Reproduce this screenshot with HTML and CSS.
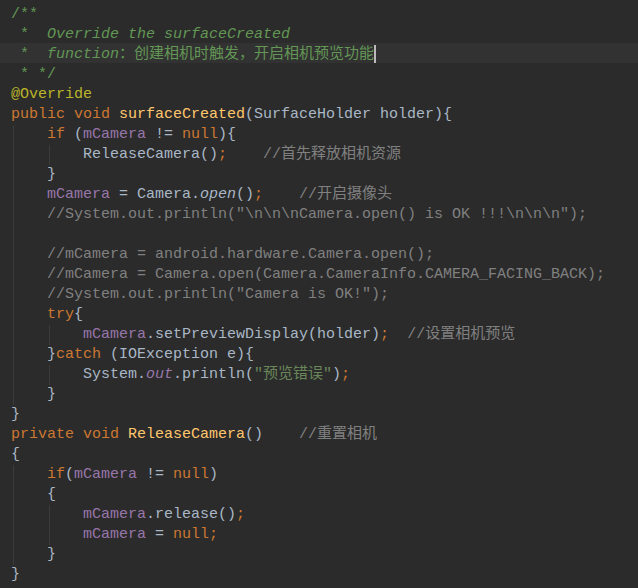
FILE: index.html
```html
<!DOCTYPE html>
<html lang="zh">
<head>
    <meta charset="UTF-8">
    <title>CameraPreview.java</title>
    <link rel="stylesheet" href="styles.css">
</head>
<body>
    <div class="editor">
        <div class="ln"><span class="doc">/**</span></div>
        <div class="ln"><span class="doc"> *  <i>Override the surfaceCreated</i></span></div>
        <div class="ln current"><span class="doc"> *  <i>function</i>：创建相机时触发，开启相机预览功能</span><span class="caret"></span></div>
        <div class="ln"><span class="doc"> * */</span></div>
        <div class="ln"><span class="ann">@Override</span></div>
        <div class="ln"><span class="kw">public void </span><span class="fn">surfaceCreated</span>(SurfaceHolder holder){</div>
        <div class="ln"><span class="g">    </span><span class="kw">if </span>(<span class="fld">mCamera</span> != <span class="kw">null</span>){</div>
        <div class="ln"><span class="g">    </span><span class="g">    </span>ReleaseCamera()<span class="kw">;</span>    <span class="cm">//首先释放相机资源</span></div>
        <div class="ln"><span class="g">    </span>}</div>
        <div class="ln"><span class="g">    </span><span class="fld">mCamera</span> = Camera.<i>open</i>()<span class="kw">;</span>    <span class="cm">//开启摄像头</span></div>
        <div class="ln"><span class="g">    </span><span class="cm">//System.out.println("\n\n\nCamera.open() is OK !!!\n\n\n");</span></div>
        <div class="ln"><span class="g">    </span></div>
        <div class="ln"><span class="g">    </span><span class="cm">//mCamera = android.hardware.Camera.open();</span></div>
        <div class="ln"><span class="g">    </span><span class="cm">//mCamera = Camera.open(Camera.CameraInfo.CAMERA_FACING_BACK);</span></div>
        <div class="ln"><span class="g">    </span><span class="cm">//System.out.println("Camera is OK!");</span></div>
        <div class="ln"><span class="g">    </span><span class="kw">try</span>{</div>
        <div class="ln"><span class="g">    </span><span class="g">    </span><span class="fld">mCamera</span>.setPreviewDisplay(holder)<span class="kw">;</span>  <span class="cm">//设置相机预览</span></div>
        <div class="ln"><span class="g">    </span>}<span class="kw">catch </span>(IOException e){</div>
        <div class="ln"><span class="g">    </span><span class="g">    </span>System.<i class="fld">out</i>.println(<span class="str">"预览错误"</span>)<span class="kw">;</span></div>
        <div class="ln"><span class="g">    </span>}</div>
        <div class="ln">}</div>
        <div class="ln"><span class="kw">private void </span><span class="fn">ReleaseCamera</span>()    <span class="cm">//重置相机</span></div>
        <div class="ln">{</div>
        <div class="ln"><span class="g">    </span><span class="kw">if</span>(<span class="fld">mCamera</span> != <span class="kw">null</span>)</div>
        <div class="ln"><span class="g">    </span>{</div>
        <div class="ln"><span class="g">    </span><span class="g">    </span><span class="fld">mCamera</span>.release()<span class="kw">;</span></div>
        <div class="ln"><span class="g">    </span><span class="g">    </span><span class="fld">mCamera</span> = <span class="kw">null;</span></div>
        <div class="ln"><span class="g">    </span>}</div>
        <div class="ln">}</div>
    </div>
</body>
</html>
```

FILE: styles.css
```css
body {
    margin: 0;
    background-color: #2b2b2b;
}
.editor {
    padding-top: 3px;
    color: #a9b7c6;
    font-family: "Liberation Mono", "Noto Sans CJK SC", monospace;
    font-size: 15px;
    line-height: 20px;
}
.ln {
    box-sizing: border-box;
    height: 20px;
    padding-top: 2px;
    padding-left: 11px;
    white-space: pre;
}
.current {
    background-color: #323232;
}
.editor i {
    font-style: italic;
}
.g {
    display: inline-block;
    height: 20px;
    vertical-align: top;
    background: linear-gradient(#3b3b3b, #3b3b3b) no-repeat 2px 0 / 1px 100%;
}
.doc {
    color: #629755;
}
.ann {
    color: #bbb529;
}
.kw {
    color: #cc7832;
}
.fn {
    color: #ffc66d;
}
.fld {
    color: #9876aa;
}
.str {
    color: #6a8759;
}
.cm {
    color: #808080;
}
.caret {
    display: inline-block;
    width: 2px;
    height: 18px;
    vertical-align: top;
    background-color: #bbbbbb;
}
```
